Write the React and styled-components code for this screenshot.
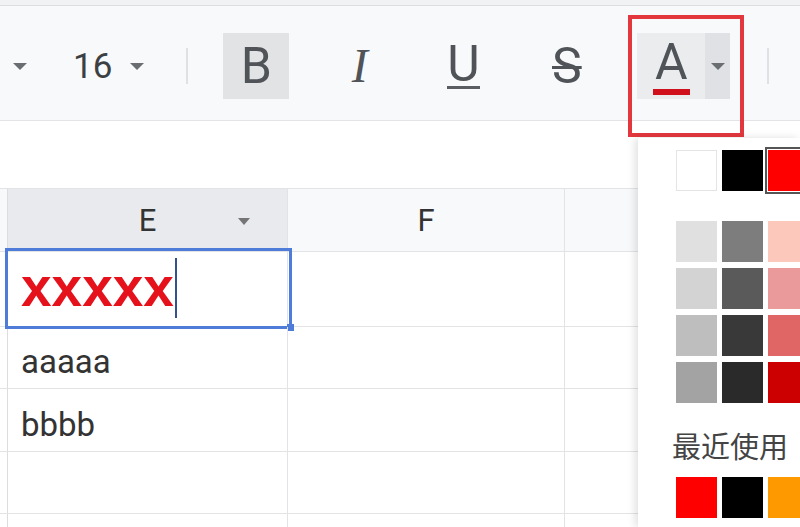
import React from "react";
import styled, { createGlobalStyle } from "styled-components";

const GlobalStyle = createGlobalStyle`
  html, body {
    margin: 0;
    padding: 0;
    background: #ffffff;
    overflow: hidden;
  }
  body {
    font-family: Roboto, "Liberation Sans", "Noto Sans CJK SC", sans-serif;
  }
`;

const Page = styled.div`
  position: relative;
  width: 800px;
  height: 527px;
  overflow: hidden;
  background: #ffffff;
`;

const TopStrip = styled.div`
  height: 5px;
  background: #f1f2f3;
  border-bottom: 1px solid #dcdee0;
`;

const Toolbar = styled.div`
  box-sizing: border-box;
  height: 115px;
  padding: 6px 0 0 13px;
  display: flex;
  align-items: center;
  background: #f8f9fa;
  border-bottom: 1px solid #e1e3e6;
`;

const Caret = styled.span`
  width: 0;
  height: 0;
  margin-left: ${(p) => p.$ml || 0}px;
  border-left: 7px solid transparent;
  border-right: 7px solid transparent;
  border-top: 7px solid #6a6d71;
`;

const FontSize = styled.span`
  margin-left: 46px;
  font-size: 35px;
  color: #3c4043;
  line-height: 1;
`;

const Sep = styled.span`
  width: 2px;
  height: 36px;
  margin-left: ${(p) => p.$ml}px;
  background: #dfe1e4;
`;

const FormatGroup = styled.div`
  display: flex;
  align-items: center;
  gap: 37.5px;
  margin-left: 35px;
`;

const FmtButton = styled.div`
  width: 66px;
  height: 66px;
  display: flex;
  align-items: center;
  justify-content: center;
  background: ${(p) => (p.$active ? "#e2e3e5" : "transparent")};
  color: #505357;
  font-size: 50px;
  line-height: 1;
`;

const Glyph = styled.span`
  display: inline-block;
  line-height: 1;
`;

const ItalicGlyph = styled(Glyph)`
  font-family: "Liberation Serif", serif;
  font-style: italic;
  font-size: 48px;
`;

const UnderGlyph = styled(Glyph)`
  border-bottom: 3px solid #5a5d61;
  line-height: 0.86;
`;

const StrikeGlyph = styled(Glyph)`
  text-decoration: line-through;
  text-decoration-thickness: 3px;
`;

const SplitButton = styled.div`
  display: flex;
  height: 66px;
`;

const ColorMain = styled.div`
  width: 68px;
  display: flex;
  flex-direction: column;
  align-items: center;
  justify-content: center;
  background: #ebecee;
  color: #505357;
  font-size: 50px;
`;

const ColorBar = styled.span`
  width: 37px;
  height: 6px;
  margin-top: 2px;
  background: #d0101c;
`;

const ColorDrop = styled.div`
  width: 25px;
  display: flex;
  align-items: center;
  justify-content: center;
  background: #dfe1e4;
`;

const Highlight = styled.div`
  position: absolute;
  left: 628px;
  top: 15px;
  width: 108px;
  height: 114px;
  border: 4px solid #e2373d;
  pointer-events: none;
`;

const Gap = styled.div`
  height: 67px;
`;

const Sheet = styled.div`
  border-top: 1px solid #e2e3e4;
`;

const Row = styled.div`
  display: grid;
  grid-template-columns: 8px 280px 277px 1fr;
  height: ${(p) => p.$h}px;
  background: ${(p) => (p.$header ? "#f8f9fa" : "#ffffff")};
  border-bottom: 1px solid #e2e3e4;
`;

const RowHead = styled.div`
  border-right: 1px solid #dcdddf;
`;

const Cell = styled.div`
  position: relative;
  min-width: 0;
  display: flex;
  align-items: center;
  justify-content: ${(p) => (p.$center ? "center" : "flex-start")};
  padding: ${(p) => (p.$center ? "0" : "8px 0 0 13px")};
  border-right: 1px solid #e2e3e4;
  background: ${(p) => p.$bg || "transparent"};
  font-size: 33px;
  color: #333333;
`;

const HeadLabel = styled.span`
  font-size: 31px;
  color: #333;
`;

const HeadCaret = styled.span`
  position: absolute;
  right: 37px;
  top: 29px;
  border-left: 6px solid transparent;
  border-right: 6px solid transparent;
  border-top: 7px solid #757575;
`;

const RedText = styled.span`
  font-family: "Liberation Sans", Arial, sans-serif;
  font-weight: bold;
  font-size: 55px;
  color: #e5121c;
  line-height: 1;
  margin-top: -12px;
`;

const TextCaret = styled.span`
  width: 2px;
  height: 60px;
  margin: -10px 0 0 1px;
  background: #33508f;
`;

const Selection = styled.div`
  position: absolute;
  left: -3px;
  top: -4px;
  right: -5px;
  bottom: -3px;
  border: 3px solid #4f7cd9;
  pointer-events: none;
`;

const Handle = styled.span`
  position: absolute;
  right: -5px;
  bottom: -5px;
  width: 7px;
  height: 7px;
  background: #4f7cd9;
`;

const Palette = styled.div`
  position: absolute;
  left: 638px;
  top: 138px;
  right: 0;
  bottom: 0;
  padding: 12px 0 0 38px;
  background: #ffffff;
  box-shadow: -3px 0 8px rgba(0, 0, 0, 0.12);
`;

const SwatchRow = styled.div`
  display: flex;
  gap: 5px;
  margin-top: ${(p) => p.$mt || 0}px;
`;

const SwatchGrid = styled.div`
  display: grid;
  grid-template-columns: repeat(3, 41px);
  grid-auto-rows: 41px;
  gap: 6px 5px;
  margin-top: 30px;
`;

const Swatch = styled.span`
  box-sizing: border-box;
  flex-shrink: 0;
  width: 41px;
  height: 41px;
  background: ${(p) => p.$c};
  border: ${(p) => (p.$outline ? "1px solid #e4e4e4" : "none")};
  outline: ${(p) => (p.$selected ? "2px solid #555" : "none")};
  outline-offset: 1px;
`;

const Label = styled.div`
  margin: 22px 0 0 -4px;
  font-family: "Noto Sans CJK SC", sans-serif;
  font-size: 29px;
  line-height: 40px;
  color: #444;
  white-space: nowrap;
`;

const grid = [
  "#e0e0e0", "#7d7d7d", "#fcc8bc",
  "#d3d3d3", "#5a5a5a", "#ea9a9a",
  "#bebebe", "#393939", "#e06666",
  "#a3a3a3", "#2a2a2a", "#cc0000",
];

export default function App() {
  return (
    <Page>
      <GlobalStyle />
      <TopStrip />
      <Toolbar>
        <Caret />
        <FontSize>16</FontSize>
        <Caret $ml={18} />
        <Sep $ml={42} />
        <FormatGroup>
          <FmtButton $active>
            <Glyph>B</Glyph>
          </FmtButton>
          <FmtButton>
            <ItalicGlyph>I</ItalicGlyph>
          </FmtButton>
          <FmtButton>
            <UnderGlyph>U</UnderGlyph>
          </FmtButton>
          <FmtButton>
            <StrikeGlyph>S</StrikeGlyph>
          </FmtButton>
          <SplitButton>
            <ColorMain>
              <Glyph>A</Glyph>
              <ColorBar />
            </ColorMain>
            <ColorDrop>
              <Caret />
            </ColorDrop>
          </SplitButton>
        </FormatGroup>
        <Sep $ml={37} />
      </Toolbar>
      <Highlight />
      <Gap />
      <Sheet>
        <Row $h={62} $header>
          <RowHead />
          <Cell $center $bg="#e8eaed">
            <HeadLabel>E</HeadLabel>
            <HeadCaret />
          </Cell>
          <Cell $center>
            <HeadLabel>F</HeadLabel>
          </Cell>
          <Cell />
        </Row>
        <Row $h={74}>
          <RowHead />
          <Cell>
            <RedText>xxxxx</RedText>
            <TextCaret />
            <Selection>
              <Handle />
            </Selection>
          </Cell>
          <Cell />
          <Cell />
        </Row>
        <Row $h={61}>
          <RowHead />
          <Cell>aaaaa</Cell>
          <Cell />
          <Cell />
        </Row>
        <Row $h={62}>
          <RowHead />
          <Cell>bbbb</Cell>
          <Cell />
          <Cell />
        </Row>
        <Row $h={61}>
          <RowHead />
          <Cell />
          <Cell />
          <Cell />
        </Row>
        <Row $h={61}>
          <RowHead />
          <Cell />
          <Cell />
          <Cell />
        </Row>
      </Sheet>
      <Palette>
        <SwatchRow>
          <Swatch $c="#ffffff" $outline />
          <Swatch $c="#000000" />
          <Swatch $c="#ff0000" $selected />
        </SwatchRow>
        <SwatchGrid>
          {grid.map((c, i) => (
            <Swatch key={i} $c={c} />
          ))}
        </SwatchGrid>
        <Label>最近使用</Label>
        <SwatchRow $mt={12}>
          <Swatch $c="#ff0000" />
          <Swatch $c="#000000" />
          <Swatch $c="#ff9900" />
        </SwatchRow>
      </Palette>
    </Page>
  );
}
